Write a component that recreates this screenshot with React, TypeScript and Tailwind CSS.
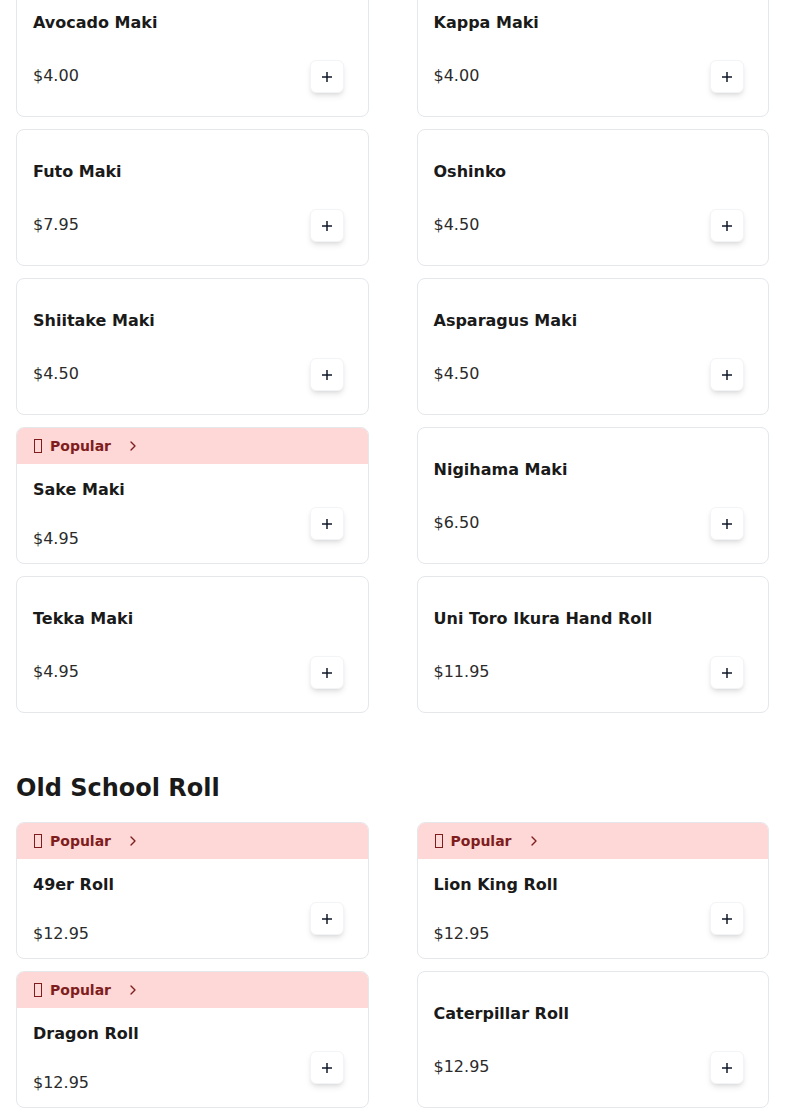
import { ChevronRight } from "lucide-react";

type Item = { name: string; price: string; popular?: boolean };

const maki: [Item, Item][] = [
  [{ name: "Avocado Maki", price: "$4.00" }, { name: "Kappa Maki", price: "$4.00" }],
  [{ name: "Futo Maki", price: "$7.95" }, { name: "Oshinko", price: "$4.50" }],
  [{ name: "Shiitake Maki", price: "$4.50" }, { name: "Asparagus Maki", price: "$4.50" }],
  [{ name: "Sake Maki", price: "$4.95", popular: true }, { name: "Nigihama Maki", price: "$6.50" }],
  [{ name: "Tekka Maki", price: "$4.95" }, { name: "Uni Toro Ikura Hand Roll", price: "$11.95" }],
];

const oldSchool: [Item, Item][] = [
  [{ name: "49er Roll", price: "$12.95", popular: true }, { name: "Lion King Roll", price: "$12.95", popular: true }],
  [{ name: "Dragon Roll", price: "$12.95", popular: true }, { name: "Caterpillar Roll", price: "$12.95" }],
];

function AddButton() {
  return (
    <button className="mb-[23px] flex h-[33px] w-[34px] shrink-0 items-center justify-center self-end rounded-md border border-gray-100 bg-white shadow-md">
      <svg width="12" height="12" viewBox="0 0 12 12" className="text-gray-900">
        <path d="M6 1v10M1 6h10" stroke="currentColor" strokeWidth="1.5" />
      </svg>
    </button>
  );
}

function Card({ item }: { item: Item }) {
  return (
    <div className="flex h-[137px] flex-col overflow-hidden rounded-lg border border-gray-200 bg-white">
      {item.popular && (
        <div className="flex h-[36px] shrink-0 items-center bg-[#fed7d7] pl-4 text-sm font-bold text-[#7f1d1d]">
          {/* missing-glyph box for the emoji */}
          <span className="ml-px mr-2 inline-block h-[14px] w-[8px] border border-current" />
          <span>Popular</span>
          <ChevronRight size={16} strokeWidth={2} className="ml-[14px]" />
        </div>
      )}
      <div className="flex flex-1 justify-between pl-4 pr-6">
        <div
          className={
            item.popular
              ? "flex flex-col justify-between pb-[12px] pt-[14px]"
              : "flex flex-col justify-between pb-[28px] pt-[30px]"
          }
        >
          <div className="text-base font-bold leading-6 text-[#1a1a1a]">{item.name}</div>
          <div className="text-base leading-6 text-[#2b2b2b]">{item.price}</div>
        </div>
        <AddButton />
      </div>
    </div>
  );
}

function Grid({ rows }: { rows: [Item, Item][] }) {
  return (
    <div className="grid grid-cols-2 gap-x-12 gap-y-3">
      {rows.flat().map((item) => (
        <Card key={item.name} item={item} />
      ))}
    </div>
  );
}

export default function App() {
  return (
    <div className="min-h-screen overflow-hidden bg-white px-4 font-['DejaVu_Sans',sans-serif]">
      <div className="-mt-5">
        <Grid rows={maki} />
      </div>
      <h2 className="mb-[18px] mt-[59px] text-2xl font-bold leading-8 text-[#1a1a1a]">Old School Roll</h2>
      <Grid rows={oldSchool} />
    </div>
  );
}
